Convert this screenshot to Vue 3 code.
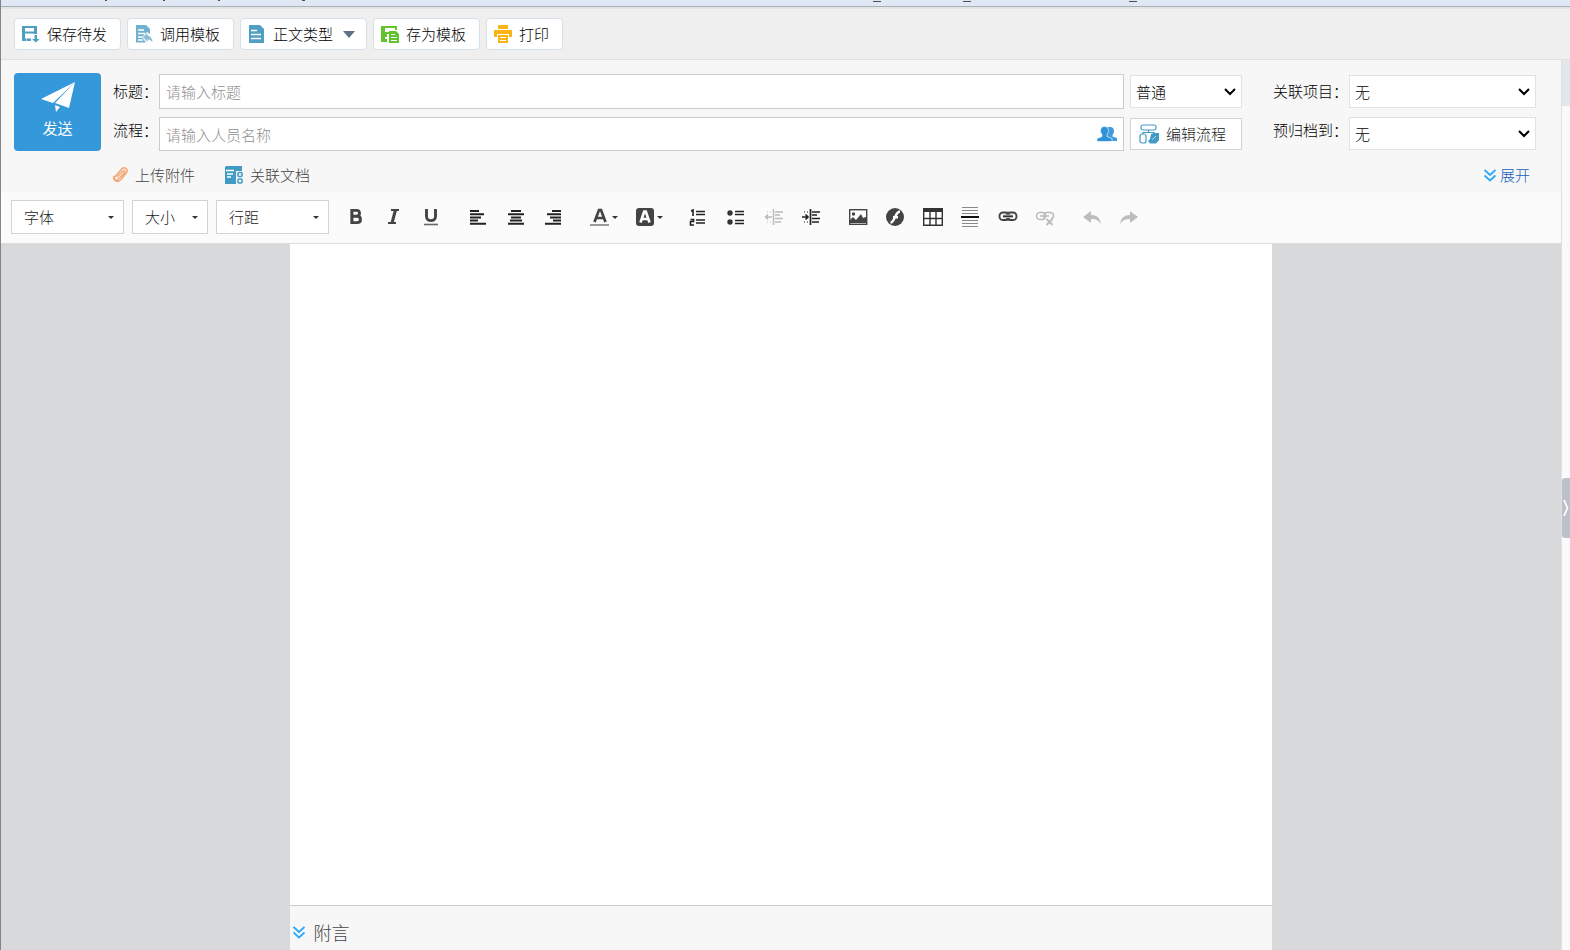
<script setup>
import { ref } from 'vue'

const title = ref('')
const flow = ref('')
const level = ref('普通')
const project = ref('无')
const archive = ref('无')

const formatSelects = [
  { label: '字体', size: 'wide' },
  { label: '大小', size: 'narrow' },
  { label: '行距', size: 'wide' },
]
</script>

<template>
  <div class="page">
    <svg class="strip" aria-hidden="true">
      <g fill="#4a4f58">
        <rect x="104" y="0" width="2" height="1" />
        <rect x="162" y="0" width="2" height="1" />
        <rect x="217" y="0" width="2" height="1" />
        <rect x="301" y="0" width="3" height="1" />
        <rect x="872" y="1" width="8" height="1" />
        <rect x="962" y="1" width="8" height="1" />
        <rect x="1128" y="1" width="8" height="1" />
      </g>
    </svg>

    <nav class="toolbar">
      <button type="button">
        <svg width="18" height="18" viewBox="0 0 18 18">
          <path fill="#4f9fc4" fill-rule="evenodd" d="M0 1h15v8h-3.500V8.500H3v5h1.500V16H0zM3 3v3.500h9V3z" />
          <path fill="#4f9fc4" d="M5 13.500h4V16H5zM12.500 10H15v4h2.500l-3.700 3.500L10 14h2.500z" />
        </svg>
        保存待发
      </button>
      <button type="button">
        <svg width="18" height="18" viewBox="0 0 18 18">
          <path fill="#6fb1cf" d="M1 0h10l4 4v5l-3-2-5 5 4 5.500H1z" />
          <path stroke="#fff" stroke-width="1.300" fill="none" d="M3 5h6M3 8.500h7M3 12h4M3 15h5" />
          <path fill="#8bbdd4" d="M8 12l4.500-4v2.500c3 .5 5 3 5 7-1-2.200-3-3.100-5-3v2.500z" />
        </svg>
        调用模板
      </button>
      <button type="button">
        <svg width="18" height="18" viewBox="0 0 18 18">
          <path fill="#4f9fc4" d="M1 0h11l4 4v14H1z" />
          <path stroke="#fff" stroke-width="1.300" d="M3 5.500h6M3 9.500h10M3 13.500h10" />
        </svg>
        正文类型
        <svg class="drop" width="12" height="7" viewBox="0 0 12 7"><path fill="#5f7189" d="M0 0h12L6 7z" /></svg>
      </button>
      <button type="button">
        <svg width="18" height="18" viewBox="0 0 18 18">
          <path fill="#62c42c" fill-rule="evenodd" d="M0 1h16v4h-2V3H4v4h5v2H6v3H4v2h2v3H0z" />
          <path fill="#62c42c" d="M8 6h7l3 3v9H8z" />
          <path stroke="#fff" stroke-width="1.200" d="M10 9.500h4M10 12.500h6M10 15.500h6" />
        </svg>
        存为模板
      </button>
      <button type="button">
        <svg width="18" height="18" viewBox="0 0 18 18">
          <path fill="#fcb316" fill-rule="evenodd" d="M4 0h10v4H4zM0 5h18v7h-3V9H3v3H0zM4 10h10v8H4zM6 12v1h6v-1zM6 15v1h6v-1z" />
        </svg>
        打印
      </button>
    </nav>

    <div class="body">
      <main class="main">
        <form class="form" @submit.prevent>
          <div class="fields">
            <button type="button" class="send">
              <svg width="34" height="30" viewBox="0 0 34 30">
                <path fill="#fff" d="M34 0L0 17l12 4zM34 0L14 21l14 5zM14 23l5 2-4 5z" />
              </svg>
              发送
            </button>

            <div class="labels">
              <label for="title">标题：</label>
              <label for="flow">流程：</label>
            </div>

            <div class="inputs">
              <input id="title" v-model="title" type="text" placeholder="请输入标题" />
              <div class="people">
                <input id="flow" v-model="flow" type="text" placeholder="请输入人员名称" />
                <button type="button" aria-label="选择人员">
                  <svg width="20" height="16" viewBox="0 0 20 16">
                    <path fill="#3f9bdc" d="M13 1c3 0 4 2 4 4s-1 3-1.500 4v1.500L20 12v3h-9l-1-6c1-3 0-6 1-8z" />
                    <path fill="#2f92d8" stroke="#fff" stroke-width=".6" d="M7.500 .5c3 0 4 2 4 4s-1 3-1.500 4v2l5 2v3H0v-3l5-2v-2c-.8-1-1.500-2-1.500-4s1-4 4-4z" />
                  </svg>
                </button>
              </div>
            </div>

            <div class="level">
              <div class="choice">
                <select v-model="level" aria-label="重要程度"><option>普通</option></select>
                <svg width="12" height="8" viewBox="0 0 12 8"><path fill="none" stroke="#000" stroke-width="2" d="M1 1l5 5 5-5" /></svg>
              </div>
              <button type="button" class="edit">
                <svg width="20" height="20" viewBox="0 0 20 20">
                  <g fill="none" stroke="#429bc4" stroke-width="1.200">
                    <rect x="2" y="1" width="15" height="5" rx="2" />
                    <path d="M9.500 6v3M4 10V8.500h11V10" />
                    <rect x="1" y="10" width="6" height="9" rx="2" />
                  </g>
                  <path fill="#429bc4" d="M12 10l3-1h5v7l-3 3.500h-6L9 17l2-2z" />
                  <path stroke="#fff" stroke-width=".6" d="M13 16l4-4" />
                </svg>
                编辑流程
              </button>
            </div>

            <div class="labels related">
              <label for="project">关联项目：</label>
              <label for="archive">预归档到：</label>
            </div>

            <div class="choices">
              <div class="choice">
                <select id="project" v-model="project"><option>无</option></select>
                <svg width="12" height="8" viewBox="0 0 12 8"><path fill="none" stroke="#000" stroke-width="2" d="M1 1l5 5 5-5" /></svg>
              </div>
              <div class="choice">
                <select id="archive" v-model="archive"><option>无</option></select>
                <svg width="12" height="8" viewBox="0 0 12 8"><path fill="none" stroke="#000" stroke-width="2" d="M1 1l5 5 5-5" /></svg>
              </div>
            </div>
          </div>

          <div class="links">
            <a href="#">
              <svg width="16" height="18" viewBox="0 0 16 18">
                <path fill="none" stroke="#f2a878" stroke-width="1.600" stroke-linecap="round" d="M5.500 10.500l5-5c1.600-1.600 3 0 1.700 1.600L6.500 13c-2.500 2.500-5.500 0-3.300-2.600l6-6.900c3-3.500 7.600-.5 5 3.500L9 13.500c-3 3.500-8.500 1.500-7-3" />
              </svg>
              上传附件
            </a>
            <a href="#">
              <svg width="18" height="18" viewBox="0 0 18 18">
                <path fill="#429bc4" d="M1 0h16v5h-6v13H0V1z" />
                <path stroke="#fff" stroke-width="1.300" d="M1 4.500h8M2 8h6M2 11h4" />
                <g fill="none" stroke="#429bc4" stroke-width="1.600"><rect x="13" y="6.500" width="4" height="4" rx="1" /><rect x="13" y="13" width="4" height="4" rx="1" /></g>
              </svg>
              关联文档
            </a>
            <a href="#" class="expand">
              <svg width="12" height="13" viewBox="0 0 12 13"><path fill="none" stroke="#2ba7fb" stroke-width="1.800" d="M.5 1L6 6l5.500-5M.5 6.500L6 11.500l5.500-5" /></svg>
              展开
            </a>
          </div>
        </form>

        <div class="editbar">
          <div v-for="s in formatSelects" :key="s.label" class="pick" :class="s.size">
            <select :aria-label="s.label"><option>{{ s.label }}</option></select>
            <svg width="6" height="3" viewBox="0 0 6 3"><path fill="#333" d="M0 0h6L3 3z" /></svg>
          </div>

          <div class="tools">
            <div class="group three">
              <button type="button" aria-label="加粗"><svg viewBox="0 0 20 20"><path fill="none" stroke="#444" stroke-width="2.900" d="M6 3.400h4.500c4 0 4 5.800 0 5.800H6h5c4.600 0 4.600 6.400 0 6.400H6zM5.800 2v15" /></svg></button>
              <button type="button" aria-label="斜体"><svg viewBox="0 0 20 20"><path fill="none" stroke="#444" stroke-width="2" d="M7 3h8M4 16h8" /><path stroke="#444" stroke-width="3" d="M11.500 3L8 16" /></svg></button>
              <button type="button" aria-label="下划线"><svg viewBox="0 0 20 20"><path fill="none" stroke="#444" stroke-width="2.900" d="M5.500 2v7.500c0 5.500 9 5.500 9 0V2" /><path stroke="#666" stroke-width="1.600" d="M3 17.500h14" /></svg></button>
            </div>
            <div class="group three">
              <button type="button" aria-label="左对齐"><svg viewBox="0 0 20 20"><path stroke="#222" stroke-width="2" d="M2 4h9M2 7.200h14M2 10.400h11M2 13.600h8M2 16.800h16" /></svg></button>
              <button type="button" aria-label="居中"><svg viewBox="0 0 20 20"><path stroke="#222" stroke-width="2" d="M5 4h10M2 7.200h16M5 10.400h10M4 13.600h12M2 16.800h16" /></svg></button>
              <button type="button" aria-label="右对齐"><svg viewBox="0 0 20 20"><path stroke="#222" stroke-width="2" d="M9 4h9M4 7.200h14M7 10.400h11M10 13.600h8M2 16.800h16" /></svg></button>
            </div>
            <div class="group colors">
              <button type="button" aria-label="文字颜色">
                <svg viewBox="0 0 20 20"><path fill="none" stroke="#444" stroke-width="2.700" d="M4.500 15L9 3h2l4.500 12M6.500 11h7" /><path stroke="#999" stroke-width="2" d="M0 18h19" /></svg>
                <svg class="caret" viewBox="0 0 6 3"><path fill="#333" d="M0 0h6L3 3z" /></svg>
              </button>
              <button type="button" aria-label="背景颜色">
                <svg viewBox="0 0 20 20"><rect x="1" y="1" width="18" height="18" rx="3" fill="#444" /><path fill="none" stroke="#fff" stroke-width="2.600" d="M5.500 15.500l3.700-11h1.600l3.700 11M7 12h6" /></svg>
                <svg class="caret" viewBox="0 0 6 3"><path fill="#333" d="M0 0h6L3 3z" /></svg>
              </button>
            </div>
            <div class="group four">
              <button type="button" aria-label="编号列表"><svg viewBox="0 0 20 20"><path fill="none" stroke="#222" stroke-width="1.600" d="M2 4l2-1v6M1.500 12.500h3v2h-3V18h3.500M7 4.500h9M7 7.500h9M7 13h9M7 16h9" /></svg></button>
              <button type="button" aria-label="项目列表"><svg viewBox="0 0 20 20"><g fill="#333"><circle cx="4" cy="6" r="2.700" /><circle cx="4" cy="15" r="2.700" /></g><path stroke="#222" stroke-width="1.600" d="M9 4.500h9M9 7.500h9M9 13.500h9M9 16.500h9" /></svg></button>
              <button type="button" aria-label="减少缩进"><svg viewBox="0 0 20 20"><g stroke="#bbb" fill="none"><path stroke-width="1.500" d="M9.500 2v16M1 10h7M4 7.500L1.500 10 4 12.500M11 5h8M11 8h5M11 11.500h8M11 15h6" /><path stroke-dasharray="1 2" d="M3 5h6M3 15h6" /></g></svg></button>
              <button type="button" aria-label="增加缩进"><svg viewBox="0 0 20 20"><g stroke="#222" fill="none"><path stroke-width="1.700" d="M9.500 2v16M1 10h6M4.500 7.500L7 10l-2.500 2.500M11 5h8M11 8h5M11 11.500h8M11 15h7" /><path stroke-dasharray="1 2" d="M3 5h6M3 15h6" /></g></svg></button>
            </div>
            <div class="group six">
              <button type="button" aria-label="图片"><svg viewBox="0 0 20 20"><rect x="1.700" y="2.700" width="17" height="14.600" fill="#fff" stroke="#444" stroke-width="1.400" /><circle cx="5.500" cy="7" r="1.700" fill="#444" /><path fill="#444" d="M2 16v-3l3-3 3 3 5-6 2 4 3-1v6z" /></svg></button>
              <button type="button" aria-label="动画"><svg viewBox="0 0 20 20"><circle cx="10" cy="10" r="9" fill="#444" /><path fill="none" stroke="#fff" stroke-width="2.400" d="M15 4.500c-5 0-5 11-9.500 11M8 10.200h5" /></svg></button>
              <button type="button" aria-label="表格"><svg viewBox="0 0 20 20"><path fill="#fff" d="M1 2h18v16H1z" /><path fill="#333" d="M0 1h20v4H0z" /><path fill="none" stroke="#333" stroke-width="1.400" d="M.7 4v14.300h18.600V4M7 5v13M13 5v13M1 11.500h18" /></svg></button>
              <button type="button" aria-label="分隔线"><svg viewBox="0 0 20 20"><path stroke="#888" d="M2 .5h16M2 3.500h16M2 6.500h16M2 13.500h16M2 16.500h16M2 19.500h16" /><path stroke="#111" stroke-width="2" d="M1 10h18" /></svg></button>
              <button type="button" aria-label="链接"><svg viewBox="0 0 20 20"><g fill="none" stroke="#444" stroke-width="1.900"><rect x="1.500" y="5.500" width="10" height="7.500" rx="3.500" /><rect x="8.500" y="5.500" width="10" height="7.500" rx="3.500" /></g><path stroke="#bbb" stroke-width="3.600" d="M5 9.300h10" /><path stroke="#333" stroke-width="1.500" d="M5 9.300h10" /></svg></button>
              <button type="button" aria-label="取消链接"><svg viewBox="0 0 20 20"><g fill="none" stroke="#bbb" stroke-width="1.500"><rect x="1.500" y="5.500" width="9" height="7" rx="3.500" /><path d="M9 13V9c0-2 1-3.500 3-3.500h3c5 0 4 6 1 6M5 9h9" /><path stroke-width="2" d="M11.500 12l6 6M17.500 12l-6 6" /></g></svg></button>
            </div>
            <div class="group two">
              <button type="button" aria-label="撤销"><svg viewBox="0 0 20 20"><path fill="#bdbdbd" d="M1 10l8-6v4c6 0 9 3 10 9-3-4-5-5-10-5v4z" /></svg></button>
              <button type="button" aria-label="重做"><svg viewBox="0 0 20 20"><path fill="#bdbdbd" d="M19 10l-8-6v4c-6 0-9 3-10 9 3-4 5-5 10-5v4z" /></svg></button>
            </div>
          </div>
        </div>

        <div class="canvas">
          <div class="sheet">
            <div class="paper" contenteditable="true" role="textbox" aria-label="正文"></div>
            <a href="#" class="note">
              <svg width="12" height="13" viewBox="0 0 12 13"><path fill="none" stroke="#2ba7fb" stroke-width="1.800" d="M.5 1L6 6l5.500-5M.5 6.500L6 11.500l5.500-5" /></svg>
              附言
            </a>
          </div>
        </div>
      </main>

      <aside class="side">
        <div class="thumb"></div>
        <button type="button" class="handle" aria-label="展开侧栏">
          <svg width="7" height="18" viewBox="0 0 7 18"><path fill="none" stroke="#fff" stroke-width="1.700" d="M2 1l3.500 8L2 17" /></svg>
        </button>
      </aside>
    </div>
  </div>
</template>

<style>
body {
  margin: 0;
}
</style>

<style scoped>
.page {
  box-sizing: border-box;
  min-height: 100vh;
  display: flex;
  flex-direction: column;
  border-left: 1px solid #858585;
  background: #f7f7f7;
  font: 300 15px/20px "Noto Sans CJK SC", sans-serif;
  color: #000;
}
.page * {
  box-sizing: border-box;
}
button,
input,
select {
  font: inherit;
  color: inherit;
  margin: 0;
  border-radius: 0;
}
button {
  display: flex;
  align-items: center;
  padding: 0;
  border: 0;
  background: none;
  cursor: pointer;
}
svg {
  display: block;
  flex: none;
}
a {
  display: flex;
  align-items: center;
  text-decoration: none;
}
.strip {
  width: 100%;
  height: 7px;
  background: #e0e8f5;
  border-bottom: 1px solid #aab0b8;
}
.toolbar {
  display: flex;
  gap: 6px;
  padding: 9px 13px;
  border-top: 2px solid #e3e4e6;
  border-bottom: 1px solid #e0e0e0;
  background: #efefef;
}
.toolbar button {
  gap: 7px;
  height: 32px;
  padding: 0 13px 0 7px;
  border: 1px solid #d5e0e8;
  border-radius: 4px;
  background: #fff;
}
.toolbar .drop {
  margin: 0 -2px 0 3px;
}
.body {
  flex: 1;
  display: flex;
}
.main {
  flex: 1;
  min-width: 0;
  display: flex;
  flex-direction: column;
}
.form {
  padding: 13px 25px 0 13px;
}
.fields {
  display: flex;
}
.send {
  width: 87px;
  height: 78px;
  flex-direction: column;
  gap: 6px;
  padding-top: 9px;
  border-radius: 4px;
  background: #3598db;
  color: #fff;
  font-weight: 400;
}
.labels {
  display: flex;
  flex-direction: column;
  gap: 19px;
  width: 46px;
  margin-left: 12px;
  padding-top: 8px;
  white-space: nowrap;
}
.labels.related {
  width: 76px;
  margin-left: 31px;
}
.inputs,
.level,
.choices {
  display: flex;
  flex-direction: column;
}
.inputs {
  flex: 1;
  gap: 8px;
  padding-top: 1px;
}
.inputs input {
  width: 100%;
  height: 35px;
  padding: 0 6px;
  border: 1px solid #ccc;
  background: #fff;
}
.inputs .people input {
  height: 34px;
}
.inputs input::placeholder {
  color: #8f8f8f;
}
.people {
  position: relative;
}
.people button {
  position: absolute;
  top: 9px;
  right: 7px;
}
.level {
  width: 112px;
  margin-left: 6px;
  gap: 10px;
  padding-top: 2px;
}
.choices {
  width: 187px;
  gap: 9px;
  padding-top: 2px;
}
.choice {
  position: relative;
}
.choice select {
  display: block;
  appearance: none;
  width: 100%;
  height: 33px;
  padding: 0 5px;
  border: 1px solid #e2e2e4;
  background: #fff;
}
.choice svg {
  position: absolute;
  top: 13px;
  right: 6px;
  pointer-events: none;
}
.edit {
  height: 32px;
  gap: 7px;
  padding-left: 8px;
  border: 1px solid #d0d3da;
  background: #fff;
  color: #222;
}
.links {
  display: flex;
  gap: 30px;
  padding: 14px 6px 7px 98px;
}
.links a {
  gap: 7px;
  color: #444;
}
.links .expand {
  gap: 4px;
  margin-left: auto;
  color: #1560b8;
}
.editbar {
  display: flex;
  align-items: center;
  padding: 8px 10px 9px;
  border-bottom: 1px solid #dcdcdc;
  background: #fbfbfb;
  color: #222;
}
.pick {
  position: relative;
  margin-right: 8px;
}
.pick.wide {
  width: 113px;
}
.pick.narrow {
  width: 76px;
}
.pick select {
  display: block;
  appearance: none;
  width: 100%;
  height: 34px;
  padding: 0 12px;
  border: 1px solid #d0d3da;
  background: #fff;
}
.pick svg {
  position: absolute;
  top: 16px;
  right: 10px;
  pointer-events: none;
}
.tools {
  display: flex;
  gap: 9px;
}
.group {
  display: flex;
}
.group button {
  flex: 1;
  height: 34px;
  justify-content: center;
}
.group svg {
  width: 20px;
  height: 20px;
}
.group .caret {
  width: 6px;
  height: 3px;
  margin-left: 2px;
}
.two {
  width: 75px;
}
.three {
  width: 113px;
}
.colors {
  width: 90px;
}
.four {
  width: 150px;
}
.six {
  width: 225px;
}
.canvas {
  flex: 1;
  display: flex;
  justify-content: center;
  background: #d7d9db;
}
.sheet {
  width: 63%;
  display: flex;
  flex-direction: column;
  background: #f7f7f7;
}
.paper {
  flex: 1;
  background: #fff;
  outline: 0;
}
.note {
  gap: 9px;
  height: 45px;
  padding: 8px 3px 0;
  border-top: 1px solid #ccc;
  font-size: 18px;
  color: #444;
}
.side {
  position: relative;
  width: 9px;
  border-left: 1px solid #e0e0e0;
  background: #fafafa;
}
.thumb {
  height: 46px;
  background: #e3e7eb;
}
.handle {
  position: absolute;
  top: calc(50% - 27px);
  left: 0;
  width: 8px;
  height: 60px;
  border-radius: 3px 0 0 3px;
  background: #bcc0ca;
}
</style>
